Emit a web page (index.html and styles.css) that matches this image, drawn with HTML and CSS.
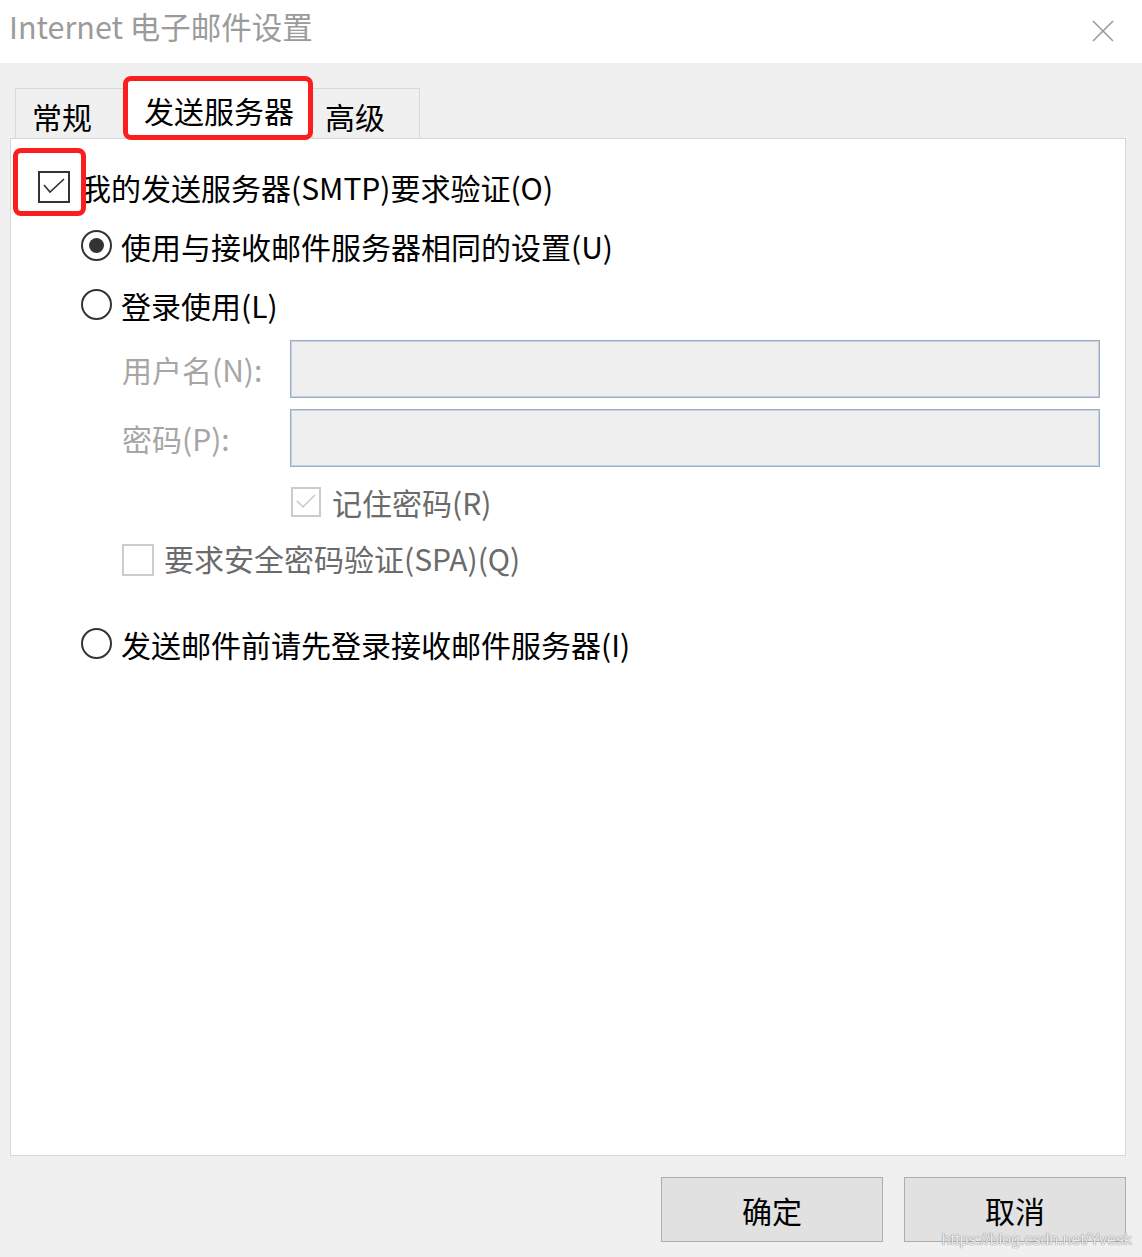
FILE: index.html
```html
<!DOCTYPE html>
<html lang="zh-CN">
<head>
<meta charset="utf-8">
<title>Internet 电子邮件设置</title>
<link rel="stylesheet" href="styles.css">
</head>
<body>
<div class="dialog">
  <div class="titlebar">
    <span class="title">Internet 电子邮件设置</span>
    <svg class="close" width="22" height="22" viewBox="0 0 22 22"><path d="M1 1 L21 21 M21 1 L1 21" stroke="#9a9a9a" stroke-width="1.6" fill="none"/></svg>
  </div>
  <div class="main">
    <div class="tabs">
      <div class="tab">常规</div>
      <div class="tab active">发送服务器</div>
      <div class="tab">高级</div>
    </div>
    <div class="panel">
      <div class="row row-main">
        <span class="cb cb-dark marked">
          <svg width="28" height="28" viewBox="0 0 28 28"><path d="M4 12 L10 19 L24 6" stroke="#333" stroke-width="1.6" fill="none"/></svg>
        </span>
        <span class="lbl">我的发送服务器(SMTP)要求验证(O)</span>
      </div>
      <div class="row row-radio">
        <span class="radio on"></span>
        <span class="lbl">使用与接收邮件服务器相同的设置(U)</span>
      </div>
      <div class="row row-radio">
        <span class="radio"></span>
        <span class="lbl">登录使用(L)</span>
      </div>
      <div class="field first">
        <span class="flabel">用户名(N):</span>
        <span class="input"></span>
      </div>
      <div class="field">
        <span class="flabel">密码(P):</span>
        <span class="input"></span>
      </div>
      <div class="row row-remember">
        <span class="cb cb-light small">
          <svg width="26" height="26" viewBox="0 0 26 26"><path d="M4 12 L10 18 L22 6" stroke="#c8c8c8" stroke-width="1.5" fill="none"/></svg>
        </span>
        <span class="lbl dim">记住密码(R)</span>
      </div>
      <div class="row row-spa">
        <span class="cb cb-light"></span>
        <span class="lbl dim">要求安全密码验证(SPA)(Q)</span>
      </div>
      <div class="row row-radio row-last">
        <span class="radio"></span>
        <span class="lbl">发送邮件前请先登录接收邮件服务器(I)</span>
      </div>
    </div>
    <div class="buttons">
      <div class="btn">确定</div>
      <div class="btn">取消</div>
    </div>
  </div>
  <div class="watermark">https://blog.csdn.net/Yvesk</div>
</div>
</body>
</html>
```
FILE: styles.css
```css
*, *::before, *::after { box-sizing: border-box; }
html, body { margin: 0; padding: 0; }
body {
  background: #f0f0f0;
  font-family: "Noto Sans CJK SC", "Noto Sans", sans-serif;
  color: #000;
}
.dialog {
  position: relative;
  width: 1142px;
  height: 1257px;
  overflow: hidden;
}
.titlebar {
  height: 63px;
  background: #fff;
  display: flex;
  align-items: center;
  justify-content: space-between;
  padding: 0 28px 9px 9px;
}
.title {
  font-size: 30.5px;
  line-height: 40px;
  color: #9b9b9b;
  margin-top: -3px;
}
.close { display: block; margin-top: 8px; }
.main { padding: 0 16px 0 10px; }
.tabs {
  height: 75px;
  display: flex;
  align-items: flex-end;
  padding-left: 5px;
}
.tab {
  height: 50px;
  width: 110px;
  border: 1px solid #d9d9d9;
  border-bottom: none;
  background: #f0f0f0;
  font-size: 30px;
  line-height: 36px;
  padding: 9px 0 0 16px;
}
.tab.active {
  position: relative;
  z-index: 2;
  width: 187px;
  height: 61px;
  margin-bottom: -1px;
  background: #fff;
  padding: 13px 0 0 18px;
}
.tab.active::after {
  content: "";
  position: absolute;
  left: -3px;
  top: -3px;
  right: -2px;
  bottom: -1px;
  border: 5px solid #fa1e1e;
  border-radius: 8px;
}
.tab:last-child { width: 108px; padding-left: 12px; }
.panel {
  height: 1018px;
  background: #fff;
  border: 1px solid #d6d6d6;
  padding: 18px 25px 0 27px;
}
.row {
  display: flex;
  align-items: center;
  height: 59px;
}
.lbl {
  font-size: 30px;
  line-height: 40px;
  white-space: nowrap;
}
.lbl.dim { color: #6b6b6b; }
.cb {
  position: relative;
  width: 32px;
  height: 32px;
  flex: none;
  display: flex;
  align-items: center;
  justify-content: center;
}
.cb-dark { border: 2px solid #333; }
.cb-light { border: 2px solid #cccccc; margin-right: 10px; }
.cb.small { width: 30px; height: 30px; }
.cb.marked::after {
  content: "";
  position: absolute;
  left: -27px;
  top: -25px;
  width: 73px;
  height: 68px;
  border: 5px solid #fa1e1e;
  border-radius: 8px;
  z-index: 3;
}
.row-main .lbl { margin-left: 11px; }
.row-radio { padding-left: 43px; }
.radio {
  width: 31px;
  height: 31px;
  border: 2px solid #333;
  border-radius: 50%;
  flex: none;
  margin-right: 9px;
  display: flex;
  align-items: center;
  justify-content: center;
}
.radio.on::before {
  content: "";
  width: 15px;
  height: 15px;
  border-radius: 50%;
  background: #333;
}
.field {
  display: flex;
  align-items: center;
  padding-left: 84px;
  margin-top: 11px;
}
.field.first { margin-top: 6px; }
.flabel {
  width: 168px;
  font-size: 30px;
  line-height: 40px;
  color: #a6a6a6;
  white-space: nowrap;
}
.input {
  width: 810px;
  height: 58px;
  background: #efefef;
  border: 1px solid #a2acbd;
  box-shadow: inset 0 0 0 1px #bcd3ec;
}
.row-remember {
  height: 70px;
  padding-left: 253px;
}
.row-remember .cb { margin-right: 11px; }
.row-spa {
  height: 46px;
  padding-left: 84px;
}
.row-spa .lbl { margin-top: -4px; }
.row-last { margin-top: 31px; }
.buttons {
  display: flex;
  justify-content: flex-end;
  gap: 21px;
  padding-top: 21px;
}
.btn {
  width: 222px;
  height: 65px;
  background: #e1e1e1;
  border: 1px solid #adadad;
  display: flex;
  align-items: center;
  justify-content: center;
  font-size: 30px;
  line-height: 40px;
}
.watermark {
  position: absolute;
  right: 10px;
  bottom: 8px;
  font-family: "Liberation Sans", Arial, sans-serif;
  font-size: 16px;
  color: rgba(255,255,255,0.85);
  text-shadow: 0 0 1px #8a8a8a, 0 0 1px #8a8a8a;
}
```
